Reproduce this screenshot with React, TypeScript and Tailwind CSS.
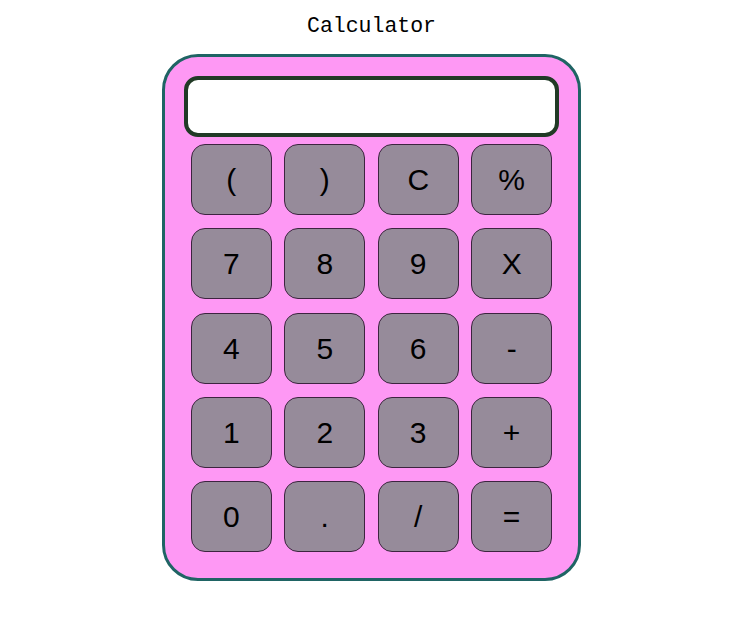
const keys = ['(', ')', 'C', '%', '7', '8', '9', 'X', '4', '5', '6', '-', '1', '2', '3', '+', '0', '.', '/', '=']

export default function App() {
	return (
		<div className="flex min-h-[618px] w-full flex-col items-center bg-white pt-[12px]">
			<h1 className="h-[29px] text-[21.5px] leading-[29px] text-black [font-family:'Liberation_Mono',monospace]">
				Calculator
			</h1>

			<div className="mt-[13px] w-[419px] rounded-[36px] border-[3px] border-[#1f6464] bg-[#fe98f4] px-[19px] pb-[26px] pt-[19px]">
				<div className="h-[61px] w-full rounded-[14px] border-4 border-[#213a26] bg-white" />

				<div className="mt-[7px] grid grid-cols-4 gap-x-[12.7px] gap-y-[13.25px] px-[7px]">
					{keys.map(key => (
						<button
							key={key}
							className="flex h-[71px] items-center justify-center rounded-[14px] border border-[#3d2440] bg-[#968b9a] text-[30px] text-black [font-family:'Liberation_Sans',Arial,sans-serif]"
						>
							{key}
						</button>
					))}
				</div>
			</div>
		</div>
	)
}
